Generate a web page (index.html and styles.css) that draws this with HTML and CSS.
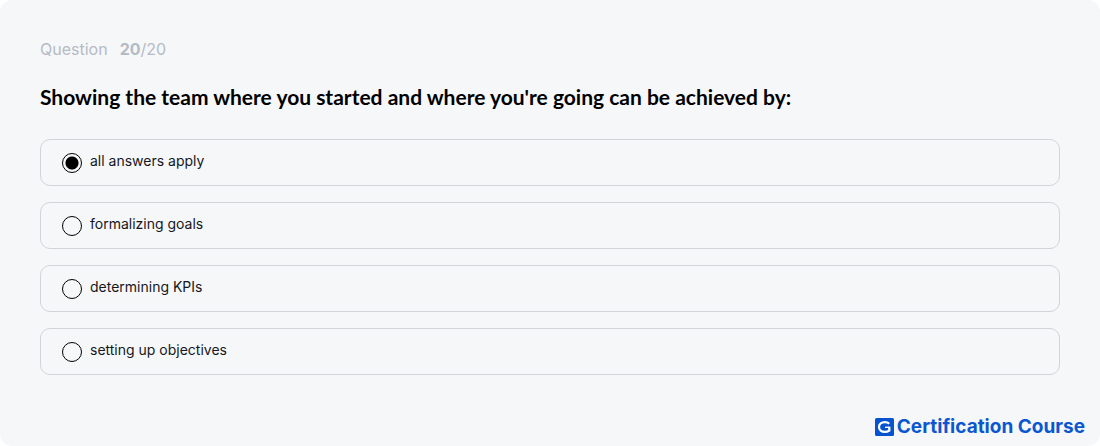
FILE: index.html
```html
<!DOCTYPE html>
<html lang="en">
<head>
<meta charset="utf-8">
<meta name="viewport" content="width=device-width, initial-scale=1">
<title>Certification Course</title>
<link rel="stylesheet" href="styles.css">
</head>
<body>
<main class="card">
  <form class="quiz">
    <p class="progress"><span>Question</span><span><strong>20</strong>/20</span></p>
    <h1 class="title" id="question">Showing the team where you started and where you're going can be achieved by:</h1>
    <div class="options" role="radiogroup" aria-labelledby="question">
      <label class="option"><input class="radio" type="radio" name="answer" checked><span class="answer">all answers apply</span></label>
      <label class="option"><input class="radio" type="radio" name="answer"><span class="answer">formalizing goals</span></label>
      <label class="option"><input class="radio" type="radio" name="answer"><span class="answer">determining KPIs</span></label>
      <label class="option"><input class="radio" type="radio" name="answer"><span class="answer">setting up objectives</span></label>
    </div>
  </form>
  <footer class="brand">
    <svg class="logo" viewBox="0 0 19 18" aria-hidden="true">
      <rect width="19" height="18" rx="1.5" fill="#0752cf"/>
      <path d="M14.2 5.8C13.1 4.6 11.6 4.1 9.9 4.1C6.5 4.1 4 6.1 4 9S6.5 13.9 9.9 13.9C11.5 13.9 13 13.5 14.3 12.6V8.8" fill="none" stroke="#fff" stroke-width="2.3"/>
      <path d="M10 9.3H14.5" fill="none" stroke="#fff" stroke-width="1.4"/>
    </svg>
    <span>Certification Course</span>
  </footer>
</main>
</body>
</html>
```
FILE: styles.css
```css
* {
  box-sizing: border-box;
}

body {
  margin: 0;
  background: #fff;
  font-family: Inter, "Liberation Sans", sans-serif;
}

.card {
  display: flex;
  flex-direction: column;
  justify-content: space-between;
  min-height: 100vh;
  background: #f6f7f9;
  border-radius: 12px;
}

.quiz {
  padding: 39px 40px 0;
}

.progress {
  display: flex;
  gap: 12px;
  margin: 0 0 24px;
  font-size: 16px;
  line-height: 20px;
  color: #b5bbc4;
}

.title {
  margin: 0 0 28px;
  font-family: Lato, Inter, sans-serif;
  font-size: 21px;
  font-weight: 700;
  line-height: 28px;
  color: #000;
}

.options {
  display: grid;
  gap: 16px;
}

.option {
  display: flex;
  align-items: center;
  gap: 8px;
  min-height: 47px;
  padding: 0 21px;
  border: 1px solid #d1d4d8;
  border-radius: 10px;
  font-size: 14px;
  line-height: 20px;
  color: #15171c;
}

.answer {
  padding-bottom: 3px;
}

.radio {
  appearance: none;
  width: 20px;
  height: 20px;
  margin: 0;
  border: 1px solid #000;
  border-radius: 50%;
}

.radio:checked {
  background: radial-gradient(circle, #000 6px, transparent 7px);
}

.brand {
  display: flex;
  align-items: center;
  justify-content: flex-end;
  gap: 3px;
  padding: 0 15px 8px;
  font-size: 19px;
  font-weight: 700;
  line-height: 22px;
  color: #0a57d0;
}

.logo {
  width: 19px;
  height: 18px;
}
```
